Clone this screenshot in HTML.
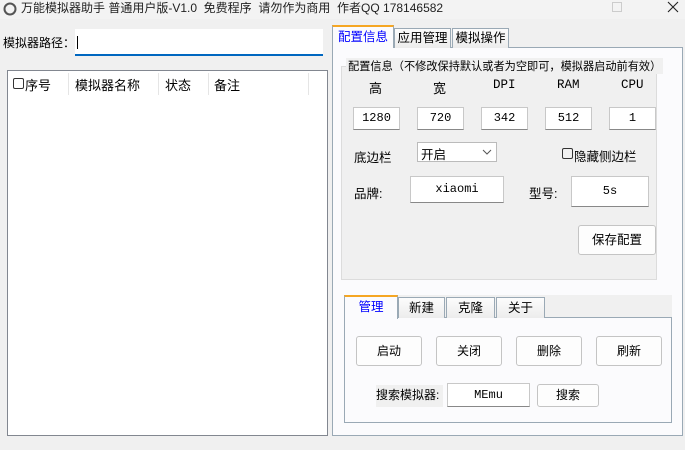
<!DOCTYPE html>
<html><head><meta charset="utf-8"><style>
*{box-sizing:border-box;margin:0;padding:0}
body{width:685px;height:450px;background:#f0f0f0;position:relative;overflow:hidden;font-family:"Liberation Sans","Noto Sans CJK SC",sans-serif;font-size:12px;color:#000}
.a{position:absolute;white-space:nowrap}
.tb{left:0;top:0;width:685px;height:19px;background:#f3f3f3}
.box{background:#fff;border:1px solid #c8c8c8;border-bottom:1px solid #888;text-align:center;font-family:"Liberation Mono","Noto Sans CJK SC",monospace;font-size:12px}
.btn{background:#fdfdfd;border:1px solid #c4c4c4;border-radius:3px;text-align:center}
.tab{border:1px solid #9aa9b5;border-bottom:none;background:linear-gradient(#fcfcfc,#ececec);text-align:center;font-size:12.5px}
</style></head><body>
<div class="a tb"></div>
<svg class="a" style="left:3px;top:2px" width="14" height="14"><circle cx="7" cy="7" r="5.5" fill="none" stroke="#555" stroke-width="2"/></svg>
<div class="a" style="left:21px;top:0px;font-size:12px;line-height:16px;color:#222">万能模拟器助手 普通用户版-V1.0&nbsp; 免费程序&nbsp; 请勿作为商用&nbsp; 作者QQ 178146582</div>
<div class="a" style="left:612px;top:2px;width:10px;height:10px;border:1px solid #ccc"></div>
<svg class="a" style="left:500px;top:0" width="185" height="16"><path d="M168 2 L178 12 M178 2 L168 12" stroke="#222" stroke-width="1.1"/></svg>

<div class="a" style="left:3px;top:34px;font-size:12px">模拟器路径：</div>
<div class="a" style="left:75px;top:29px;width:248px;height:27px;background:#fff;border-bottom:2px solid #0067c0"></div>
<div class="a" style="left:77px;top:36px;width:1px;height:13px;background:#000"></div>

<div class="a" style="left:7px;top:70px;width:321px;height:366px;background:#fff;border:1px solid #828790"></div>
<div class="a" style="left:8px;top:71px;width:300px;height:25px;font-size:13px">
 <div class="a" style="left:5px;top:7px;width:11px;height:11px;border:1px solid #333;border-radius:2px"></div>
 <div class="a" style="left:17px;top:4px">序号</div>
 <div class="a" style="left:60px;top:2px;width:1px;height:22px;background:#e5e5e5"></div>
 <div class="a" style="left:67px;top:4px">模拟器名称</div>
 <div class="a" style="left:150px;top:2px;width:1px;height:22px;background:#e5e5e5"></div>
 <div class="a" style="left:157px;top:4px">状态</div>
 <div class="a" style="left:200px;top:2px;width:1px;height:22px;background:#e5e5e5"></div>
 <div class="a" style="left:206px;top:4px">备注</div>
 <div class="a" style="left:300px;top:2px;width:1px;height:22px;background:#e5e5e5"></div>
</div>

<div class="a" style="left:332px;top:47px;width:351px;height:389px;background:#fbfbfd;border:1px solid #9aa9b5"></div>
<div class="a tab" style="left:394px;top:28px;width:57px;height:20px;line-height:19px">应用管理</div>
<div class="a tab" style="left:452px;top:28px;width:57px;height:20px;line-height:19px">模拟操作</div>
<div class="a" style="left:332px;top:25px;width:62px;height:23px;background:#fbfbfd;border:1px solid #9aa9b5;border-bottom:none;border-top:2px solid #f5a623;color:#0000ff;text-align:center;line-height:20px;font-size:12.5px">配置信息</div>

<div class="a" style="left:341px;top:66px;width:316px;height:214px;background:#f0f0f0;border:1px solid #dcdcdc"></div>
<div class="a" style="left:346px;top:58px;background:#f0f0f0;padding:0 2px;font-size:11.2px">配置信息（不修改保持默认或者为空即可，模拟器启动前有效）</div>
<div class="a" style="left:369px;top:78px;font-size:13px">高</div>
<div class="a" style="left:433px;top:78px;font-size:13px">宽</div>
<div class="a" style="left:493px;top:78px;font-family:'Liberation Mono',monospace;font-size:12.5px">DPI</div>
<div class="a" style="left:557px;top:78px;font-family:'Liberation Mono',monospace;font-size:12.5px">RAM</div>
<div class="a" style="left:621px;top:78px;font-family:'Liberation Mono',monospace;font-size:12.5px">CPU</div>
<div class="a box" style="left:353px;top:107px;width:47px;height:23px;line-height:21px">1280</div>
<div class="a box" style="left:417px;top:107px;width:47px;height:23px;line-height:21px">720</div>
<div class="a box" style="left:481px;top:107px;width:47px;height:23px;line-height:21px">342</div>
<div class="a box" style="left:545px;top:107px;width:47px;height:23px;line-height:21px">512</div>
<div class="a box" style="left:609px;top:107px;width:47px;height:23px;line-height:21px">1</div>
<div class="a" style="left:354px;top:147px;font-size:12.5px">底边栏</div>
<div class="a" style="left:417px;top:142px;width:80px;height:20px;background:#fff;border:1px solid #bbb"><span class="a" style="left:3px;top:1px;font-size:12.5px">开启</span><svg class="a" style="left:64px;top:6px" width="10" height="6"><path d="M1 1 L5 5 L9 1" fill="none" stroke="#555"/></svg></div>
<div class="a" style="left:562px;top:148px;width:11px;height:11px;border:1px solid #333;border-radius:2px"></div>
<div class="a" style="left:574px;top:146px;font-size:12.5px">隐藏侧边栏</div>
<div class="a" style="left:354px;top:183px;font-size:12.5px">品牌:</div>
<div class="a box" style="left:410px;top:176px;width:94px;height:27px;line-height:25px">xiaomi</div>
<div class="a" style="left:529px;top:183px;font-size:12.5px">型号:</div>
<div class="a box" style="left:571px;top:176px;width:78px;height:31px;line-height:29px">5s</div>
<div class="a btn" style="left:578px;top:225px;width:78px;height:30px;line-height:28px;font-size:12.5px">保存配置</div>

<div class="a" style="left:344px;top:295px;width:328px;height:23px;background:#f0f0f0"></div>
<div class="a" style="left:344px;top:317px;width:328px;height:106px;background:#fbfbfd;border:1px solid #9aa9b5"></div>
<div class="a tab" style="left:398px;top:297px;width:47px;height:21px;line-height:20px">新建</div>
<div class="a tab" style="left:446px;top:297px;width:49px;height:21px;line-height:20px">克隆</div>
<div class="a tab" style="left:496px;top:297px;width:49px;height:21px;line-height:20px">关于</div>
<div class="a" style="left:344px;top:295px;width:54px;height:24px;background:#fbfbfd;border:1px solid #9aa9b5;border-bottom:none;border-top:2px solid #f5a623;color:#0000ff;text-align:center;line-height:21px;font-size:12.5px">管理</div>
<div class="a btn" style="left:356px;top:336px;width:66px;height:30px;line-height:28px">启动</div>
<div class="a btn" style="left:436px;top:336px;width:66px;height:30px;line-height:28px">关闭</div>
<div class="a btn" style="left:516px;top:336px;width:66px;height:30px;line-height:28px">删除</div>
<div class="a btn" style="left:596px;top:336px;width:66px;height:30px;line-height:28px">刷新</div>
<div class="a" style="left:376px;top:385px;background:#f0f0f0;height:22px;width:67px;line-height:20px;font-size:12px">搜索模拟器:</div>
<div class="a box" style="left:447px;top:383px;width:83px;height:24px;line-height:22px">MEmu</div>
<div class="a btn" style="left:537px;top:384px;width:62px;height:23px;line-height:21px">搜索</div>
</body></html>
